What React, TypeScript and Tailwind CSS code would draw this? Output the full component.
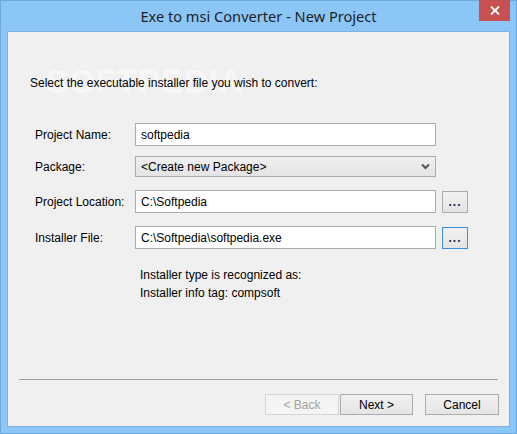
import React from 'react'

const ui = { fontFamily: '"Liberation Sans", Arial, sans-serif' }

function BrowseButton({ focused }: { focused?: boolean }) {
  return (
    <button
      className={`ml-[6px] h-[22px] w-[26px] flex items-end justify-center pb-[4px] bg-gradient-to-b from-[#f2f2f2] to-[#e3e3e3] border ${
        focused ? 'border-[#3c8fdc]' : 'border-[#acacac]'
      }`}
    >
      <span className="text-[12px] font-bold leading-none text-[#1a1a4a] tracking-[1px]">...</span>
    </button>
  )
}

function Field({ label, value, browse, focused }: { label: string; value: string; browse?: boolean; focused?: boolean }) {
  return (
    <div className="flex items-center h-[23px]">
      <div className="w-[100px] text-[12px] text-[#000]">{label}</div>
      <div className="w-[301px] h-[23px] bg-white border border-[#acacac] flex items-center px-[5px] text-[12px] text-[#000]">
        {value}
      </div>
      {browse && <BrowseButton focused={focused} />}
    </div>
  )
}

export default function App() {
  return (
    <div className="w-[517px] h-[434px] bg-[#8cc6f7] flex flex-col border border-[#6fa8dc]" style={ui}>
      {/* Title bar */}
      <div className="relative h-[30px] flex items-center justify-center">
        <span className="text-[14.6px] text-[#1e1e1e] mt-[1px]" style={{ fontFamily: '"Noto Sans", "Open Sans", sans-serif' }}>
          Exe to msi Converter - New Project
        </span>
        <button className="absolute right-[6px] top-[-1px] w-[31px] h-[21px] bg-[#c75050] flex items-center justify-center">
          <svg width="10" height="9" viewBox="0 0 10 9">
            <path d="M1 0.5 L9 8.5 M9 0.5 L1 8.5" stroke="#fff" strokeWidth="1.8" />
          </svg>
        </button>
      </div>

      {/* Client */}
      <div className="mx-[6px] flex-1 mb-[6px] bg-[#f0f0f0] border border-[#7fb1de] relative flex flex-col">
        <div className="absolute left-[38px] top-[33px] text-[33px] leading-none font-bold tracking-[1px] text-white/50 select-none pointer-events-none">
          SOFTPEDIA
        </div>

        <div className="relative pl-[22px] pt-[44px] text-[12px] text-[#000] leading-[14px]">
          Select the executable installer file you wish to convert:
        </div>

        <div className="relative pl-[27px] mt-[33px] flex flex-col">
          <Field label="Project Name:" value="softpedia" />

          <div className="flex items-center h-[21px] mt-[10px]">
            <div className="w-[100px] text-[12px] text-[#000]">Package:</div>
            <div className="w-[301px] h-[21px] bg-gradient-to-b from-[#f0f0f0] to-[#e4e4e4] border border-[#acacac] flex items-center justify-between pl-[5px] pr-[5px] text-[12px] text-[#000]">
              <span>&lt;Create new Package&gt;</span>
              <svg width="9" height="7" viewBox="0 0 9 7">
                <path d="M1 1.5 L4.5 5 L8 1.5" stroke="#555" strokeWidth="2" fill="none" />
              </svg>
            </div>
          </div>

          <div className="mt-[13px]">
            <Field label="Project Location:" value="C:\Softpedia" browse />
          </div>
          <div className="mt-[13px]">
            <Field label="Installer File:" value="C:\Softpedia\softpedia.exe" browse focused />
          </div>

          <div className="pl-[105px] mt-[17px] text-[12px] text-[#000] leading-[18px]">
            <div>Installer type is recognized as:</div>
            <div>Installer info tag: compsoft</div>
          </div>
        </div>

        <div className="flex-1" />

        <div className="mx-[11px] h-px bg-[#a0a0a0]" />

        <div className="flex justify-end items-center pr-[10px] pt-[14px] pb-[11px] text-[12px]">
          <button className="w-[74px] h-[21px] border border-[#d5d5d5] bg-[#f4f4f4] text-[#a3a3a3]">&lt; Back</button>
          <button className="ml-[1px] w-[73px] h-[21px] border border-[#acacac] bg-gradient-to-b from-[#f0f0f0] to-[#e5e5e5] text-[#000]">
            Next &gt;
          </button>
          <button className="ml-[12px] w-[74px] h-[21px] border border-[#acacac] bg-gradient-to-b from-[#f0f0f0] to-[#e5e5e5] text-[#000]">
            Cancel
          </button>
        </div>
      </div>
    </div>
  )
}
